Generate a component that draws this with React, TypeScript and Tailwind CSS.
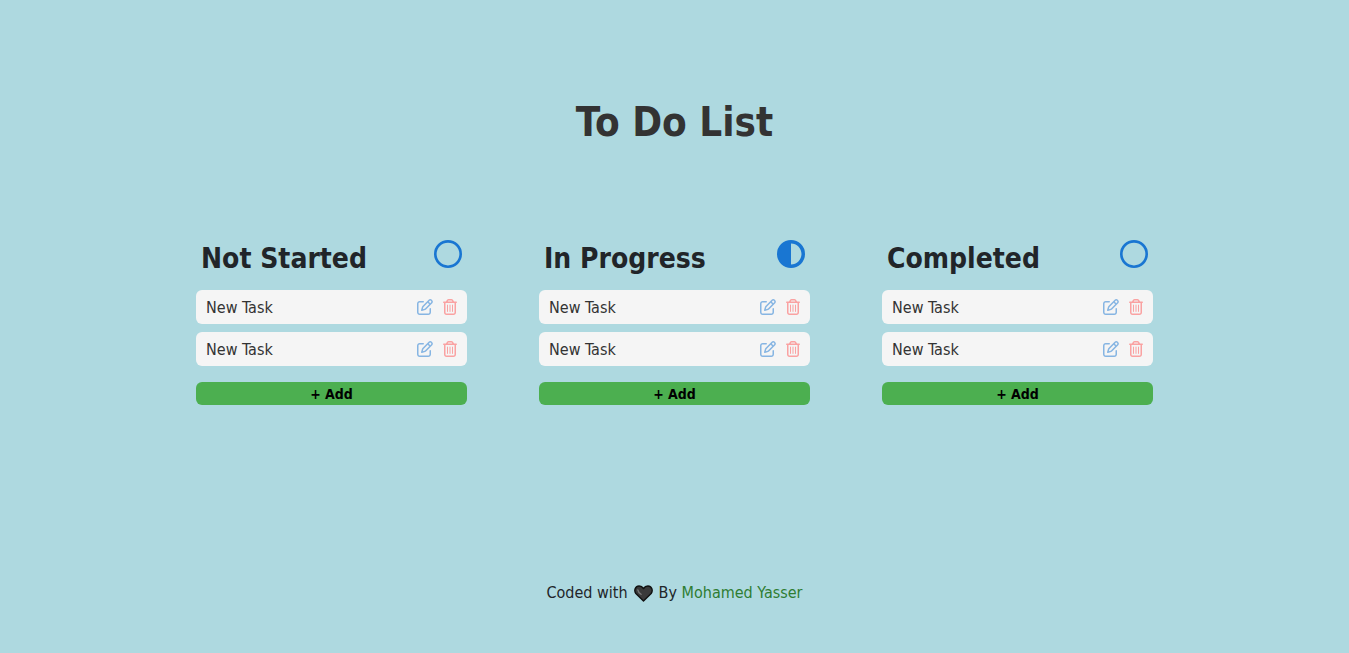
import { FaCircleHalfStroke, FaRegCircle, FaRegPenToSquare, FaRegTrashCan } from "react-icons/fa6";

type Column = { title: string; started: boolean; tasks: string[] };

const columns: Column[] = [
  { title: "Not Started", started: false, tasks: ["New Task", "New Task"] },
  { title: "In Progress", started: true, tasks: ["New Task", "New Task"] },
  { title: "Completed", started: false, tasks: ["New Task", "New Task"] },
];

function Task({ name }: { name: string }) {
  return (
    <li className="flex items-center justify-between rounded-md bg-[#f5f5f5] px-2.5 py-[5px] text-[#333333]">
      <span className="pt-0.5 leading-[22px]">{name}</span>
      <span className="flex items-center gap-2.5">
        <button type="button" aria-label="Edit task" className="text-[#1976d2] opacity-50">
          <FaRegPenToSquare className="size-4" />
        </button>
        <button type="button" aria-label="Delete task" className="text-[#ff5252] opacity-50">
          <FaRegTrashCan className="h-4 w-3.5" />
        </button>
      </span>
    </li>
  );
}

function TaskColumn({ column }: { column: Column }) {
  const Status = column.started ? FaCircleHalfStroke : FaRegCircle;
  return (
    <section>
      <header className="flex items-start justify-between px-[5px]">
        <h2 className="text-[28px] leading-[38px] font-bold">{column.title}</h2>
        <Status className="size-7 text-[#1976d2]" />
      </header>
      <ul className="mt-3 flex flex-col gap-2">
        {column.tasks.map((task, i) => (
          <Task key={i} name={task} />
        ))}
      </ul>
      <button
        type="button"
        className="mt-4 block w-full rounded-md bg-[#4caf50] pt-0.5 text-sm leading-[21px] font-bold text-black"
      >
        + Add
      </button>
    </section>
  );
}

export default function App() {
  return (
    <div className="flex min-h-screen flex-col items-center bg-[#aed9e0] px-6 pt-24 pb-12 font-[Tahoma,'DejaVu_Sans_Condensed','Noto_Sans',sans-serif] text-base leading-6 text-[#212529]">
      <h1 className="text-[40px] leading-[52px] font-bold text-[#333333]">To Do List</h1>
      <main className="mt-[92px] grid w-full max-w-[957px] grid-cols-1 gap-[72px] md:grid-cols-3">
        {columns.map((column) => (
          <TaskColumn key={column.title} column={column} />
        ))}
      </main>
      <footer className="mt-auto flex items-center gap-1.5">
        <span>Coded with</span>
        <svg viewBox="0 0 20 18" className="h-[17px] w-[19px]" role="img" aria-label="love">
          <path
            d="M10 17 1.9 9C-.5 5.7 1.4 1.1 5.3 1.1c2 0 3.7 1 4.7 2.7 1-1.7 2.7-2.7 4.7-2.7 3.9 0 5.8 4.6 3.4 7.9Z"
            fill="#3a3a3a"
            stroke="#111111"
            strokeWidth="1.5"
            strokeLinejoin="round"
          />
          <path d="M4 5.2c.3 1.8 1.5 3.3 3.4 4.6" fill="none" stroke="#777777" strokeWidth="1.5" strokeLinecap="round" />
        </svg>
        <span>
          By{" "}
          <a href="#" className="text-[#2e7d32]">
            Mohamed Yasser
          </a>
        </span>
      </footer>
    </div>
  );
}
